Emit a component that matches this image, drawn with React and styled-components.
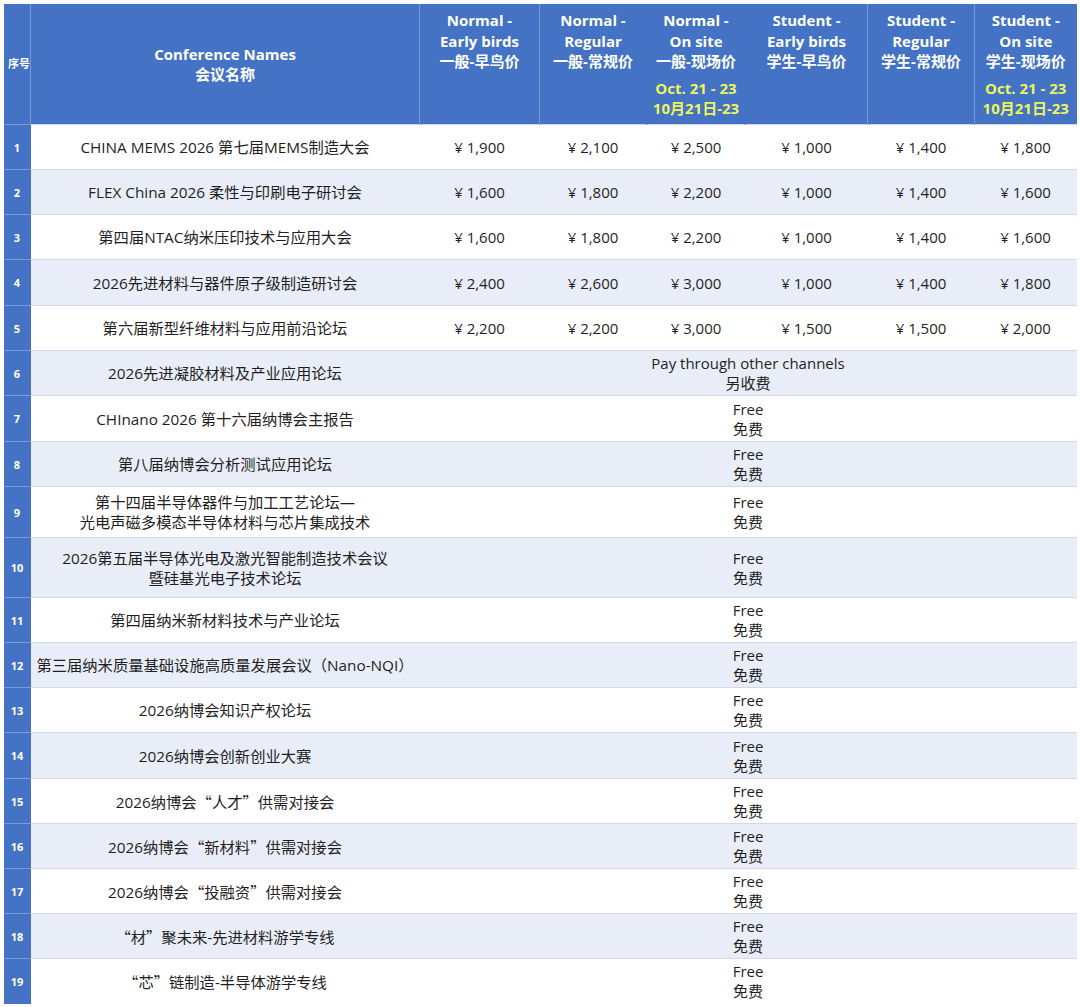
import React from 'react';
import styled, { createGlobalStyle } from 'styled-components';

const GlobalStyle = createGlobalStyle`
    html, body {
        margin: 0;
        padding: 0;
        background: #ffffff;
    }
    body {
        font-family: "Open Sans", "Noto Sans CJK SC", sans-serif;
        color: #1f1f1f;
    }
`;

const blue = '#4472c4';
const stripe = '#e9edf7';
const line = '#d2d8e5';
const yellow = '#eef55a';

const Page = styled.div`
    padding: 3px 4px 4px 3px;
`;

const Table = styled.table`
    width: 1073px;
    table-layout: fixed;
    border-collapse: collapse;
`;

const HeadRow = styled.tr`
    height: 121px;
    background-color: ${blue};
`;

const HeadCell = styled.th`
    padding: ${({ $middle }) => ($middle ? '0 4px' : '6px 2px 0')};
    vertical-align: ${({ $middle }) => ($middle ? 'middle' : 'top')};
    border-left: 1px solid ${({ $divider }) => ($divider ? 'rgba(255,255,255,0.28)' : 'transparent')};
    border-top: 1px solid rgba(255,255,255,0.25);
    color: #ffffff;
    font-size: ${({ $small }) => ($small ? '11px' : '15px')};
    font-weight: 700;
    line-height: 20.5px;
    text-align: center;
    white-space: nowrap;
`;

const HeadLine = styled.div`
    color: ${({ $date }) => ($date ? yellow : '#ffffff')};
`;

const DateBlock = styled.div`
    margin-top: 6px;
`;

const Row = styled.tr`
    height: ${({ $h }) => $h}px;
    background-color: ${({ $alt }) => ($alt ? stripe : '#ffffff')};
`;

const IndexCell = styled.td`
    background-color: ${blue};
    border-top: 1px solid rgba(255,255,255,0.3);
    color: #ffffff;
    font-size: 11px;
    font-weight: 700;
    text-align: center;
    padding: 0;
`;

const NameCell = styled.td`
    border-top: 1px solid ${line};
    font-size: 15.3px;
    line-height: 20px;
    text-align: center;
    padding: 0 4px;
    white-space: nowrap;
`;

const Quote = styled.span`
    font-family: "Noto Sans CJK SC", sans-serif;
`;

const PriceCell = styled.td`
    border-top: 1px solid ${line};
    font-size: 15px;
    text-align: center;
    padding: 0;
    white-space: nowrap;
`;

const SpanCell = styled.td`
    border-top: 1px solid ${line};
    font-size: 15px;
    line-height: 20px;
    text-align: center;
    padding: 0;
`;

const headers = [
    { en: ['Normal -', 'Early birds'], zh: '一般-早鸟价', divider: true },
    { en: ['Normal -', 'Regular'], zh: '一般-常规价', divider: true },
    { en: ['Normal -', 'On site'], zh: '一般-现场价', date: true },
    { en: ['Student -', 'Early birds'], zh: '学生-早鸟价' },
    { en: ['Student -', 'Regular'], zh: '学生-常规价', divider: true },
    { en: ['Student -', 'On site'], zh: '学生-现场价', date: true, divider: true },
];

const colWidths = [27, 389, 120, 107, 99, 122, 107, 102];

// row heights as measured from the sheet
const rowHeights = [45, 45, 45, 46, 45, 45, 46, 45, 51, 60, 45, 45, 45, 46, 45, 45, 45, 45, 45];

const priced = [
    { name: ['CHINA MEMS 2026 第七届MEMS制造大会'], prices: ['1,900', '2,100', '2,500', '1,000', '1,400', '1,800'] },
    { name: ['FLEX China 2026 柔性与印刷电子研讨会'], prices: ['1,600', '1,800', '2,200', '1,000', '1,400', '1,600'] },
    { name: ['第四届NTAC纳米压印技术与应用大会'], prices: ['1,600', '1,800', '2,200', '1,000', '1,400', '1,600'] },
    { name: ['2026先进材料与器件原子级制造研讨会'], prices: ['2,400', '2,600', '3,000', '1,000', '1,400', '1,800'] },
    { name: ['第六届新型纤维材料与应用前沿论坛'], prices: ['2,200', '2,200', '3,000', '1,500', '1,500', '2,000'] },
];

const spanned = [
    { name: ['2026先进凝胶材料及产业应用论坛'], note: ['Pay through other channels', '另收费'] },
    { name: ['CHInano 2026 第十六届纳博会主报告'] },
    { name: ['第八届纳博会分析测试应用论坛'] },
    { name: ['第十四届半导体器件与加工工艺论坛—', '光电声磁多模态半导体材料与芯片集成技术'] },
    { name: ['2026第五届半导体光电及激光智能制造技术会议', '暨硅基光电子技术论坛'] },
    { name: ['第四届纳米新材料技术与产业论坛'] },
    { name: ['第三届纳米质量基础设施高质量发展会议（Nano-NQI）'] },
    { name: ['2026纳博会知识产权论坛'] },
    { name: ['2026纳博会创新创业大赛'] },
    { name: ['2026纳博会“人才”供需对接会'] },
    { name: ['2026纳博会“新材料”供需对接会'] },
    { name: ['2026纳博会“投融资”供需对接会'] },
    { name: ['“材”聚未来-先进材料游学专线'] },
    { name: ['“芯”链制造-半导体游学专线'] },
];

// curly quotes are full width in the original, so give them the CJK face
const withQuotes = (text) =>
    text.split(/([“”])/).map((part, i) =>
        part === '“' || part === '”' ? <Quote key={i}>{part}</Quote> : part
    );

const Lines = ({ items }) => items.map((t, i) => <div key={i}>{withQuotes(t)}</div>);

const App = () => {
    return (
        <Page>
            <GlobalStyle />
            <Table>
                <colgroup>
                    {colWidths.map((w, i) => <col key={i} style={{ width: w }} />)}
                </colgroup>
                <thead>
                    <HeadRow>
                        <HeadCell $middle $small>序号</HeadCell>
                        <HeadCell $middle $divider>
                            <div>Conference Names</div>
                            <div>会议名称</div>
                        </HeadCell>
                        {headers.map((h, i) => (
                            <HeadCell key={i} $divider={h.divider}>
                                {h.en.map((t) => <HeadLine key={t}>{t}</HeadLine>)}
                                <HeadLine>{h.zh}</HeadLine>
                                {h.date && (
                                    <DateBlock>
                                        <HeadLine $date>Oct. 21 - 23</HeadLine>
                                        <HeadLine $date>10月21日-23</HeadLine>
                                    </DateBlock>
                                )}
                            </HeadCell>
                        ))}
                    </HeadRow>
                </thead>
                <tbody>
                    {priced.map((r, i) => (
                        <Row key={i} $alt={i % 2 === 1} $h={rowHeights[i]}>
                            <IndexCell>{i + 1}</IndexCell>
                            <NameCell><Lines items={r.name} /></NameCell>
                            {r.prices.map((p, j) => (
                                <PriceCell key={j}>¥ {p}</PriceCell>
                            ))}
                        </Row>
                    ))}
                    {spanned.map((r, k) => {
                        const i = k + priced.length;
                        return (
                            <Row key={i} $alt={i % 2 === 1} $h={rowHeights[i]}>
                                <IndexCell>{i + 1}</IndexCell>
                                <NameCell><Lines items={r.name} /></NameCell>
                                <SpanCell colSpan={6}>
                                    <Lines items={r.note || ['Free', '免费']} />
                                </SpanCell>
                            </Row>
                        );
                    })}
                </tbody>
            </Table>
        </Page>
    );
};

export default App;
